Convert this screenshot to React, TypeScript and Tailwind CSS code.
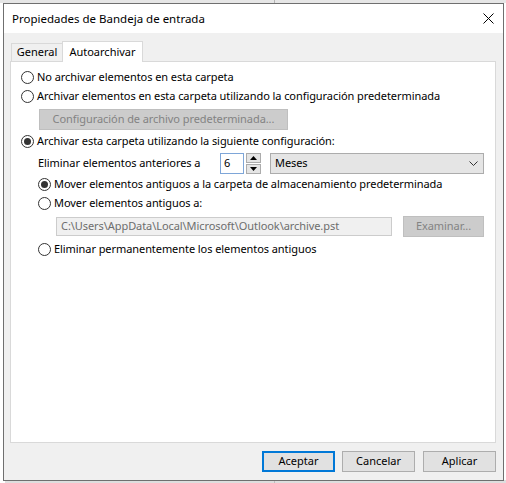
import React from "react";

function Radio({ checked }: { checked?: boolean }) {
  return (
    <span className="w-[13px] h-[13px] rounded-full border border-[#333333] bg-white flex items-center justify-center shrink-0">
      {checked && <span className="w-[7px] h-[7px] rounded-full bg-[#333333]" />}
    </span>
  );
}

function RadioRow({ checked, label, className }: { checked?: boolean; label: string; className?: string }) {
  return (
    <div className={"flex items-center h-[19px] gap-[3px] " + (className ?? "")}>
      <Radio checked={checked} />
      <span className="whitespace-nowrap">{label}</span>
    </div>
  );
}

export default function App() {
  return (
    <div className="relative w-[506px] h-[483px] bg-white overflow-hidden font-['Noto_Sans',sans-serif] text-[11px] text-black">
      {/* desktop behind window */}
      <div className="absolute left-0 top-0 w-full h-[3px] bg-[#e6e6e6]">
        <div className="absolute left-[274px] top-0 w-px h-full bg-[#b4b4b4]" />
      </div>
      <div className="absolute left-[5px] top-[480px] w-[501px] h-[3px] bg-[#dedede]" />
      <div className="absolute left-[274px] top-[480px] w-px h-[3px] bg-[#bdbdbd]" />

      {/* window */}
      <div className="absolute left-[3px] top-[3px] w-[501px] h-[478px] border border-[#6f6f6f] flex flex-col bg-[#f0f0f0]">
        {/* title bar */}
        <div className="h-[29px] bg-white flex items-center justify-between pl-[8px] pr-[9px] shrink-0">
          <span className="text-[11.5px]">Propiedades de Bandeja de entrada</span>
          <svg width="11" height="11" viewBox="0 0 11 11" className="shrink-0">
            <path d="M0.5 0.5 L10.5 10.5 M10.5 0.5 L0.5 10.5" stroke="#000" strokeWidth="1" fill="none" />
          </svg>
        </div>

        {/* body */}
        <div className="flex-1 flex flex-col pl-[6px] pt-[8px]">
          {/* tabs */}
          <div className="flex items-end h-[20px]">
            <div className="ml-px w-[51px] h-[18px] border-t border-l border-[#d9d9d9] bg-[#f0f0f0] flex items-center justify-center">
              General
            </div>
            <div className="relative z-10 -mb-px w-[81px] h-[21px] border-t border-l border-r border-[#d9d9d9] bg-white flex items-center justify-center">
              Autoarchivar
            </div>
          </div>

          {/* panel */}
          <div className="w-[486px] h-[382px] border border-[#d9d9d9] bg-white pl-[10px] pt-[6px] flex flex-col tracking-[-0.07px]">
            <RadioRow label="No archivar elementos en esta carpeta" />
            <RadioRow label="Archivar elementos en esta carpeta utilizando la configuración predeterminada" />
            <div className="ml-[18px] mt-[3px] w-[249px] h-[21px] bg-[#cccccc] border border-[#bfbfbf] text-[#838383] flex items-center justify-center">
              Configuración de archivo predeterminada...
            </div>
            <RadioRow checked className="mt-[2px]" label="Archivar esta carpeta utilizando la siguiente configuración:" />

            <div className="mt-[2px] h-[21px] flex items-center pl-[17px]">
              <span className="w-[182px] whitespace-nowrap">Eliminar elementos anteriores a</span>
              <div className="w-[24px] h-[21px] border border-[#7ea6d8] bg-white flex items-center pl-[3px]">6</div>
              <div className="ml-[2px] w-[15px] h-[21px] flex flex-col justify-between">
                <div className="h-[10px] border border-[#acacac] bg-[#e5e5e5] flex items-center justify-center">
                  <svg width="7" height="4" viewBox="0 0 7 4"><path d="M3.5 0 L7 4 L0 4 Z" fill="#000" /></svg>
                </div>
                <div className="h-[10px] border border-[#acacac] bg-[#e5e5e5] flex items-center justify-center">
                  <svg width="7" height="4" viewBox="0 0 7 4"><path d="M0 0 L7 0 L3.5 4 Z" fill="#000" /></svg>
                </div>
              </div>
              <div className="ml-[9px] w-[214px] h-[21px] bg-[#e5e5e5] border border-[#acacac] flex items-center justify-between pl-[4px] pr-[5px]">
                <span>Meses</span>
                <svg width="9" height="5" viewBox="0 0 9 5">
                  <path d="M0.5 0.5 L4.5 4.5 L8.5 0.5" stroke="#333" strokeWidth="1" fill="none" />
                </svg>
              </div>
            </div>

            <RadioRow checked className="mt-[1px] ml-[17px]" label="Mover elementos antiguos a la carpeta de almacenamiento predeterminada" />
            <RadioRow className="ml-[17px]" label="Mover elementos antiguos a:" />

            <div className="mt-[3px] h-[21px] flex items-center ml-[35px]">
              <div className="w-[336px] h-[19px] bg-[#f0f0f0] border border-[#cccccc] text-[#6d6d6d] flex items-center pl-[4px] whitespace-nowrap">
                C:\Users\AppData\Local\Microsoft\Outlook\archive.pst
              </div>
              <div className="ml-[11px] w-[81px] h-[21px] bg-[#cccccc] border border-[#bfbfbf] text-[#838383] flex items-center justify-center">
                Examinar...
              </div>
            </div>

            <RadioRow className="mt-[3px] ml-[17px]" label="Eliminar permanentemente los elementos antiguos" />
          </div>

          {/* buttons */}
          <div className="mt-[8px] flex pl-[252px]">
            <div className="w-[73px] h-[21px] bg-[#e1e1e1] border-2 border-[#0078d7] flex items-center justify-center">Aceptar</div>
            <div className="ml-[7px] w-[73px] h-[21px] bg-[#e1e1e1] border border-[#adadad] flex items-center justify-center">Cancelar</div>
            <div className="ml-[8px] w-[73px] h-[21px] bg-[#e1e1e1] border border-[#adadad] flex items-center justify-center">Aplicar</div>
          </div>
        </div>
      </div>
    </div>
  );
}
